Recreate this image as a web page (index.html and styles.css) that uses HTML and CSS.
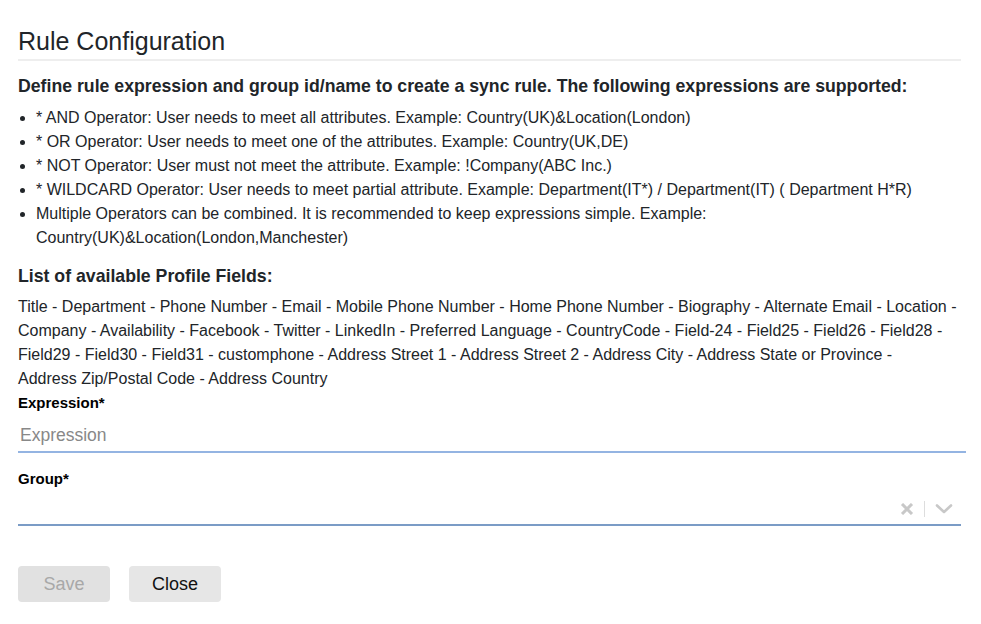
FILE: index.html
```html
<!DOCTYPE html>
<html>
<head>
<meta charset="utf-8">
<link rel="stylesheet" href="styles.css">
</head>
<body>
<div class="page">
  <h1 class="title">Rule Configuration</h1>
  <h2 class="intro">Define rule expression and group id/name to create a sync rule. The following expressions are supported:</h2>
  <ul class="ops">
    <li>* AND Operator: User needs to meet all attributes. Example: Country(UK)&amp;Location(London)</li>
    <li>* OR Operator: User needs to meet one of the attributes. Example: Country(UK,DE)</li>
    <li>* NOT Operator: User must not meet the attribute. Example: !Company(ABC Inc.)</li>
    <li>* WILDCARD Operator: User needs to meet partial attribute. Example: Department(IT*) / Department(IT) ( Department H*R)</li>
    <li>Multiple Operators can be combined. It is recommended to keep expressions simple. Example: Country(UK)&amp;Location(London,Manchester)</li>
  </ul>
  <h2 class="sub">List of available Profile Fields:</h2>
  <p class="fields">Title - Department - Phone Number - Email - Mobile Phone Number - Home Phone Number - Biography - Alternate Email - Location - Company - Availability - Facebook - Twitter - LinkedIn - Preferred Language - CountryCode - Field-24 - Field25 - Field26 - Field28 - Field29 - Field30 - Field31 - customphone - Address Street 1 - Address Street 2 - Address City - Address State or Province - <span class="nowrap">Address Zip/Postal Code</span> - Address Country</p>
  <label class="label">Expression*</label>
  <input class="expr" type="text" placeholder="Expression">
  <label class="label group-label">Group*</label>
  <div class="select">
    <div class="select-value"></div>
    <div class="select-icons">
      <svg class="clear" width="14" height="12" viewBox="0 0 14 12"><path d="M2 1 L12 11 M12 1 L2 11" stroke="#c8c8c8" stroke-width="3" fill="none"/></svg>
      <span class="sep"></span>
      <svg class="chev" width="18" height="10" viewBox="0 0 18 10"><path d="M2 1.5 L9 8 L16 1.5" stroke="#c8c8c8" stroke-width="2.6" fill="none" stroke-linecap="round" stroke-linejoin="round"/></svg>
    </div>
  </div>
  <div class="actions">
    <button class="btn btn-disabled" disabled>Save</button>
    <button class="btn">Close</button>
  </div>
</div>
</body>
</html>
```

FILE: styles.css
```css
html, body {
  margin: 0;
  padding: 0;
  background: #fff;
}
body {
  font-family: "Liberation Sans", Arial, sans-serif;
  color: #212529;
}
.page {
  padding: 20px 20px 0 18px;
  width: 943px;
}
.title {
  font-size: 25px;
  font-weight: 400;
  line-height: 32px;
  margin: 5px 0 0 0;
  padding-bottom: 2px;
  border-bottom: 2px solid #eeeeee;
  color: #212529;
}
.intro {
  font-size: 17.7px;
  font-weight: 700;
  line-height: 24px;
  margin: 13px 0 8px 0;
  color: #212529;
}
.ops {
  margin: 0;
  padding-left: 18px;
  font-size: 16px;
  line-height: 24px;
}
.sub {
  font-size: 17.7px;
  font-weight: 700;
  line-height: 24px;
  margin: 14px 0 7px 0;
}
.fields {
  font-size: 16px;
  line-height: 24px;
  margin: 0;
}
.nowrap {
  white-space: nowrap;
}
.label {
  display: block;
  font-size: 15px;
  font-weight: 700;
  color: #000;
  line-height: 24px;
}
.expr {
  display: block;
  box-sizing: border-box;
  width: 948px;
  height: 38px;
  border: none;
  border-bottom: 2px solid #94b4e2;
  outline: none;
  padding: 5px 2px 0 2px;
  font-family: "Liberation Sans", Arial, sans-serif;
  font-size: 17.5px;
  color: #212529;
  margin: 0;
  background: #fff;
}
.expr::placeholder {
  color: #888;
}
.group-label {
  margin-top: 14px;
}
.select {
  display: flex;
  align-items: center;
  box-sizing: border-box;
  width: 943px;
  height: 31px;
  margin-top: 4px;
  border-bottom: 2px solid #7b9cc6;
}
.select-value {
  flex: 1;
}
.select-icons {
  display: flex;
  align-items: center;
  gap: 10px;
  padding-right: 8px;
  padding-bottom: 1px;
}
.sep {
  width: 1px;
  height: 16px;
  background: #dddddd;
}
.actions {
  display: flex;
  gap: 19px;
  margin-top: 40px;
}
.btn {
  width: 92px;
  height: 36px;
  border: none;
  border-radius: 4px;
  background: #e6e6e6;
  font-family: "Liberation Sans", Arial, sans-serif;
  font-size: 18px;
  color: #111;
  padding: 0;
}
.btn-disabled {
  background: #e1e1e1;
  color: #a8a8a8;
}
```
